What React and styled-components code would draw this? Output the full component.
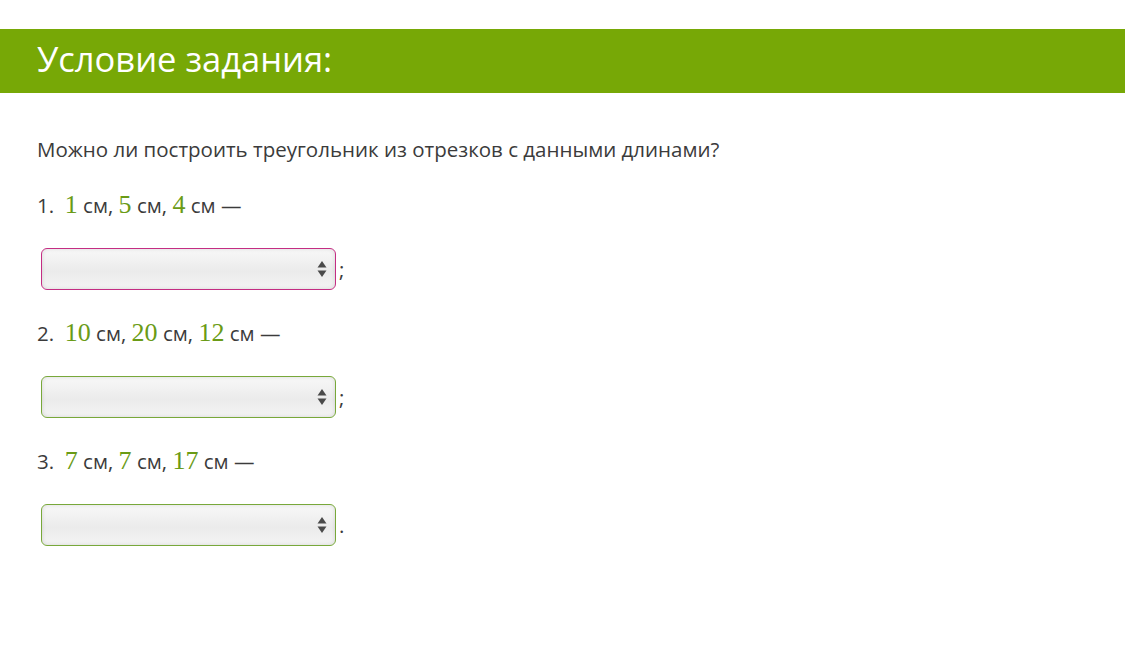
import React from "react";
import styled, { createGlobalStyle } from "styled-components";

const GlobalStyle = createGlobalStyle`
    html, body {
        margin: 0;
        padding: 0;
        background: #fff;
    }
    body {
        font-family: "Open Sans", "Liberation Sans", sans-serif;
        color: #3b3b3b;
    }
`;

const items = [
    { n: 1, lens: ["1", "5", "4"], end: ";", invalid: true },
    { n: 2, lens: ["10", "20", "12"], end: ";" },
    { n: 3, lens: ["7", "7", "17"], end: "." },
];

function App() {
    return (
        <Page>
            <GlobalStyle />
            <Header>
                <Title>Условие задания:</Title>
            </Header>
            <Body>
                <Question>
                    Можно ли построить треугольник из отрезков с данными длинами?
                </Question>
                {items.map((item) => (
                    <Item key={item.n}>
                        <Line>
                            {item.n}.&nbsp;{" "}
                            {item.lens.map((l, i) => (
                                <React.Fragment key={i}>
                                    <Num>{l}</Num> см{i < 2 ? ", " : " —"}
                                </React.Fragment>
                            ))}
                        </Line>
                        <AnswerRow>
                            <Select $invalid={item.invalid}>
                                <Arrows width="10" height="18" viewBox="0 0 10 18">
                                    <path d="M5 1 L9.5 7.5 L0.5 7.5 Z" fill="#4a4a4a" />
                                    <path d="M5 17 L9.5 10.5 L0.5 10.5 Z" fill="#4a4a4a" />
                                </Arrows>
                            </Select>
                            <End>{item.end}</End>
                        </AnswerRow>
                    </Item>
                ))}
            </Body>
        </Page>
    );
}

const Page = styled.div`
    padding-top: 29px;
    width: 1125px;
    height: 669px;
    box-sizing: border-box;
`;
const Header = styled.div`
    background: #77a806;
    height: 64px;
    display: flex;
    align-items: center;
    padding-left: 37px;
`;
const Title = styled.h1`
    margin: 0;
    font-size: 34.5px;
    font-weight: 400;
    color: #fff;
    line-height: 1;
    padding-bottom: 3px;
`;
const Body = styled.div`
    padding: 41px 37px 0;
    font-size: 20.5px;
`;
const Question = styled.p`
    margin: 0 0 25px;
    line-height: 30px;
`;
const Item = styled.div`
    display: flex;
    flex-direction: column;
    margin-bottom: 27px;
`;
const Line = styled.div`
    line-height: 32px;
    margin-bottom: 27px;
`;
const Num = styled.span`
    font-family: "Liberation Serif", "Times New Roman", serif;
    font-size: 26px;
    color: #6a9b16;
`;
const AnswerRow = styled.div`
    display: flex;
    align-items: center;
    padding-left: 4px;
`;
const Select = styled.div`
    width: 295px;
    height: 42px;
    box-sizing: border-box;
    border: 1px solid ${(p) => (p.$invalid ? "#c42d83" : "#78a83a")};
    border-radius: 6px;
    background: linear-gradient(#f8f8f8, #ebebeb 55%, #f4f4f4);
    box-shadow: inset 0 0 4px rgba(0, 0, 0, 0.12);
    display: flex;
    align-items: center;
    justify-content: flex-end;
    padding-right: 8px;
`;
const Arrows = styled.svg`
    display: block;
`;
const End = styled.span`
    margin-left: 3px;
    font-size: 20.5px;
`;

export default App;
